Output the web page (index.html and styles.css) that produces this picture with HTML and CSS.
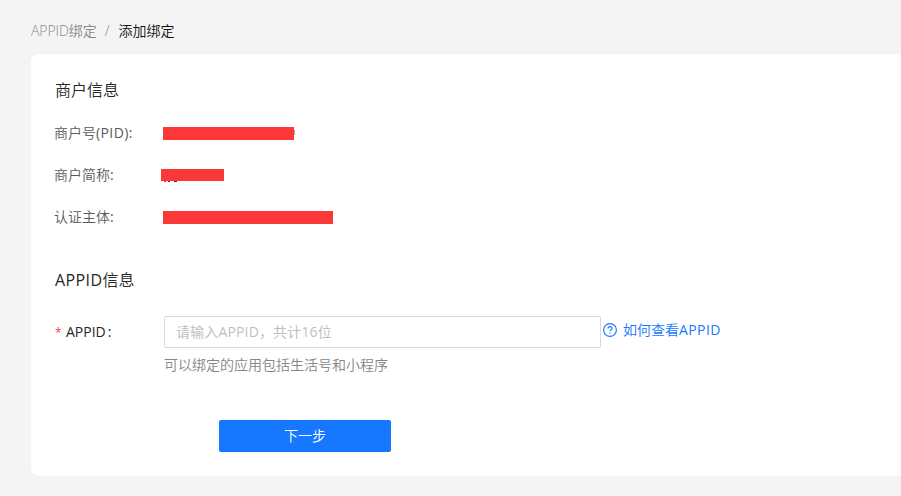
FILE: index.html
```html
<!DOCTYPE html>
<html lang="zh-CN">
<head>
<meta charset="utf-8">
<title>添加绑定</title>
<link rel="stylesheet" href="styles.css">
</head>
<body>
<nav class="crumbs"><span><span class="tight">APPID</span>绑定</span><span class="sep">/</span><span class="current">添加绑定</span></nav>
<main class="card">
<h2>商户信息</h2>
<dl class="info">
<div class="row"><dt>商户号<span class="wide">(PID):</span></dt><dd><span class="mask mask-pid"></span></dd></div>
<div class="row"><dt>商户简称<span class="wide">:</span></dt><dd><span class="mask mask-name"></span></dd></div>
<div class="row"><dt>认证主体<span class="wide">:</span></dt><dd><span class="mask mask-subject"></span></dd></div>
</dl>
<h2 class="second"><span class="wide">APPID</span>信息</h2>
<form>
<div class="field">
<label for="appid"><span class="star">*</span><span>APPID</span><span class="colon">:</span></label>
<input id="appid" placeholder="请输入APPID，共计16位">
<a class="help"><svg viewBox="0 0 14 14" width="14" height="14"><circle cx="7" cy="7" r="6.4"/><path d="M5 5.6C5 3 9 3 9 5.4C9 6.8 7 6.7 7 8.2"/><path d="M7 9.6v1.1"/></svg><span>如何查看<span class="wide">APPID</span></span></a>
</div>
<p class="hint">可以绑定的应用包括生活号和小程序</p>
<button type="button">下一步</button>
</form>
</main>
</body>
</html>
```
FILE: styles.css
```css
* { box-sizing: border-box; }
body {
  margin: 0;
  height: 496px;
  overflow: hidden;
  background: #f4f4f4;
  font: 350 14px/22px "Open Sans", "Noto Sans CJK SC", sans-serif;
  color: #262626;
}
.crumbs { display: flex; padding: 20px 0 0 31px; height: 54px; color: #888; }
.sep { margin: 0 8px; }
.current { margin-left: 1px; color: #111; }
.wide { font-weight: 400; letter-spacing: 0.4px; }
.tight { letter-spacing: -0.1px; }
.card {
  margin-left: 31px;
  height: 422px;
  padding: 24px 0 0 24px;
  background: #fff;
  border-radius: 8px 0 0 8px;
}
h2 { margin: 0; font-size: 16px; line-height: 24px; font-weight: 350; }
.info { margin: 20px 0 0 -1px; }
.row { display: flex; height: 22px; margin-bottom: 20px; color: #595959; }
dt { width: 109px; white-space: nowrap; }
dd { margin: 0; display: flex; align-items: center; }
.mask { display: block; position: relative; height: 13px; background: #fb3737; }
.mask-pid { width: 131px; }
.mask-pid::after {
  content: "";
  position: absolute;
  top: 3px;
  right: -1px;
  width: 1px;
  height: 5px;
  background: #a9a9bd;
}
.mask-name { width: 63px; height: 12px; margin-left: -2px; }
.mask-name::after {
  content: "";
  position: absolute;
  left: 3px;
  bottom: -1px;
  width: 14px;
  height: 1px;
  background: linear-gradient(90deg, #a44 2px, #fff 2px 4px, #633 4px 6px, #fff 6px 10px, #522 10px 13px, #fff 13px);
}
.mask-subject { width: 170px; }
.second { margin-top: 40px; }
.field { display: flex; margin-top: 24px; height: 32px; }
label { display: flex; width: 109px; line-height: 32px; font-weight: 400; }
.star { width: 11px; font-size: 12px; line-height: 34px; color: #f0444c; }
.colon { margin-left: 2px; }
input {
  width: 437px;
  height: 32px;
  padding: 0 11px 2px;
  border: 1px solid #d9d9d9;
  border-radius: 2px;
  font: inherit;
  font-weight: 400;
}
input::placeholder { color: #bfbfbf; opacity: 1; letter-spacing: 0.15px; }
.help { display: flex; align-items: center; height: 28px; margin-left: 2px; color: #1677ff; white-space: nowrap; }
.help svg { margin-right: 6px; fill: none; stroke: #1677ff; stroke-width: 1.1; }
.hint { margin: 6px 0 0 109px; color: #858585; }
button {
  display: block;
  width: 172px;
  height: 32px;
  margin: 44px 0 0 164px;
  padding: 0;
  border: 0;
  border-radius: 2px;
  background: #1677ff;
  color: #fff;
  font: inherit;
}
```
